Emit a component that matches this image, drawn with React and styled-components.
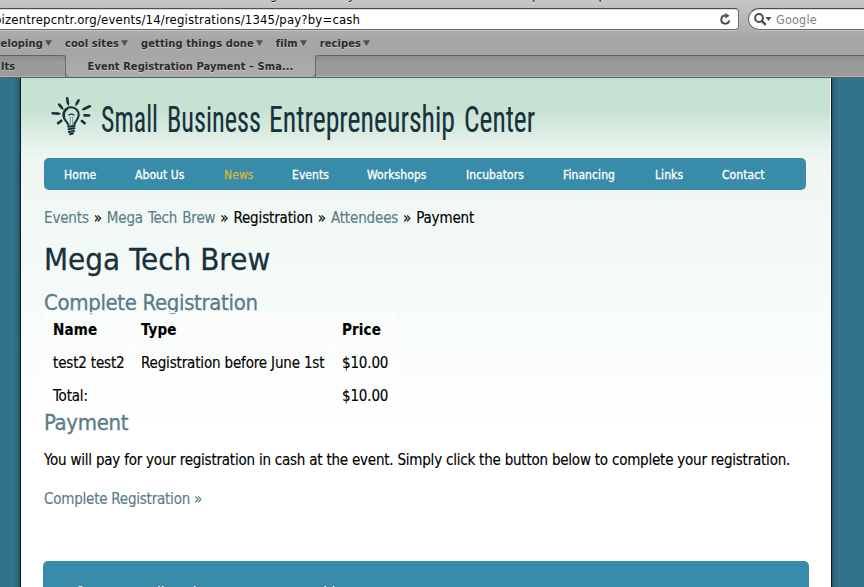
import React from 'react';
import styled, { createGlobalStyle } from 'styled-components';

const Global = createGlobalStyle`
  * { box-sizing: border-box; }
  body { margin: 0; overflow: hidden; }
`;

const sans = '"DejaVu Sans Condensed", "DejaVu Sans", sans-serif';

const Window = styled.div`
  width: 864px;
  height: 587px;
  display: flex;
  flex-direction: column;
  overflow: hidden;
  font-family: ${sans};
  font-stretch: condensed;
  color: #000;
`;

/* Browser chrome */
const Chrome = styled.header`
  flex: none;
  height: 78px;
  background: linear-gradient(#c6c6c6 0, #bdbdbd 12px, #a6a6a6 40px, #a5a5a5 100%);
`;

const TitleBar = styled.div`
  height: 8px;
  display: flex;
  align-items: flex-end;
  overflow: hidden;
  padding: 0 0 5px 215px;
  font-size: 13px;
  line-height: 16px;
  letter-spacing: 0.38px;
  white-space: nowrap;
  color: #111;
  text-shadow: 0 1px 0 rgba(255, 255, 255, 0.6);
`;

const AddressRow = styled.div`
  display: flex;
  height: 22px;
  gap: 9px;
`;

const UrlField = styled.div`
  width: 739px;
  display: flex;
  align-items: center;
  justify-content: space-between;
  padding: 1px 6px 0 0;
  background: #fff;
  border: 1px solid #6d6d6d;
  border-top: 1px solid #4e4e4e;
  border-left: 0;
  border-radius: 0 4px 4px 0;
  box-shadow: 0 1px 0 #c4c4c4, inset 0 1px 0 #d8d8d8;
  font-size: 13px;
  line-height: 16px;
  letter-spacing: 0.17px;
`;

const Url = styled.span`
  margin-left: -6px;
`;

const SearchField = styled.div`
  flex: 1;
  display: flex;
  align-items: center;
  gap: 4px;
  padding: 1px 0 0 5px;
  background: #fff;
  border: 1px solid #6d6d6d;
  border-top-color: #4e4e4e;
  border-right: 0;
  border-radius: 11px 0 0 11px;
  box-shadow: 0 1px 0 #c4c4c4, inset 0 1px 0 #d8d8d8;
  font-size: 12.5px;
  letter-spacing: 0.2px;
  color: #808080;
`;

const Bookmarks = styled.nav`
  height: 25px;
  display: flex;
  align-items: center;
  gap: 13px;
  padding-top: 1px;
  font-size: 11px;
  font-weight: 700;
  letter-spacing: 0.12px;
  color: #2b2b2b;
  text-shadow: 0 1px 0 rgba(255, 255, 255, 0.35);
`;

const Bookmark = styled.span`
  display: flex;
  align-items: center;
  gap: 2px;
  margin-left: ${(p) => p.$shift || 0}px;
  white-space: nowrap;
`;

const Tabs = styled.div`
  height: 23px;
  display: flex;
  border-bottom: 1px solid #606060;
  font-size: 11px;
  font-weight: 700;
  letter-spacing: 0.07px;
  line-height: 21px;
  color: #2b2b2b;
  text-shadow: 0 1px 0 rgba(255, 255, 255, 0.35);
`;

const BackTab = styled.div`
  width: ${(p) => (p.$grow ? 'auto' : '66px')};
  flex: ${(p) => (p.$grow ? 1 : 'none')};
  padding-left: 1px;
  background: linear-gradient(#8e8e8e, #9b9b9b 7px, #9b9b9b);
  border-top: 1px solid #636363;
  border-${(p) => (p.$grow ? 'left' : 'right')}: 1px solid #6c6c6c;
  border-radius: ${(p) => (p.$grow ? '4px 0 0 0' : '0 4px 0 0')};
  box-shadow: inset 0 -1px 0 #b5b5b5;
`;

const ActiveTab = styled.div`
  width: 251px;
  margin: 0 -1px;
  z-index: 1;
  text-align: center;
  line-height: 23px;
  background: linear-gradient(#a6a6a6, #adadad);
  border: solid #6c6c6c;
  border-width: 0 1px;
  border-radius: 0 0 5px 5px;
`;

/* Site */
const Site = styled.main`
  flex: 1;
  display: flex;
  min-height: 0;
  background: #30738a;
  -webkit-text-stroke: 0.15px currentColor;
`;

const Side = styled.div`
  width: ${(p) => p.$width}px;
  flex: none;
  background: linear-gradient(to ${(p) => p.$dir}, #30738a calc(100% - 8px), #2c697e calc(100% - 4px), #235464 calc(100% - 1px), #0b1d24 calc(100% - 1px), #0b1d24 100%);
`;

const Page = styled.div`
  flex: 1;
  display: flex;
  flex-direction: column;
  padding: 0 21px 0 23px;
  border-right: 1px solid #fff;
  background: linear-gradient(#c4e1d1 0, #c6e2d3 30px, #e9f4ee 72px, #f0f7f2 84px, #f3f9f6 170px, #f8fcfa 250px, #fff 350px);
`;

const Brand = styled.div`
  height: 80px;
  flex: none;
`;

const Menu = styled.nav`
  height: 32px;
  flex: none;
  width: 762px;
  display: flex;
  align-items: center;
  padding: 1px 0 0 20px;
  background: #398ca9;
  border-radius: 5px;
  font-size: 12px;
  letter-spacing: 0.08px;
  color: #fff;
`;

const MenuItem = styled.a`
  width: ${(p) => p.$width}px;
  flex: none;
  color: ${(p) => (p.$active ? '#d2b541' : '#fff')};
  -webkit-text-stroke: 0.3px currentColor;
`;

const Crumbs = styled.div`
  margin-top: 18px;
  font-size: 15px;
  line-height: 20px;
  letter-spacing: -0.15px;
  word-spacing: 0.8px;
  white-space: nowrap;
`;

const Link = styled.a`
  color: #5a7c88;
`;

const Title = styled.h1`
  margin: 11px 0 0;
  font-size: 31px;
  line-height: 40px;
  letter-spacing: 0.05px;
  font-weight: 400;
  color: #18323c;
  -webkit-text-stroke: 0.3px currentColor;
`;

const Heading = styled.h2`
  margin: ${(p) => p.$top}px 0 0;
  font-size: 22px;
  line-height: 26px;
  letter-spacing: -0.35px;
  font-weight: 400;
  color: #5a7c88;
  -webkit-text-stroke: 0.3px currentColor;
`;

const Table = styled.table`
  width: 352px;
  margin-top: -4px;
  border-collapse: collapse;
  table-layout: fixed;
  font-size: 15px;
  line-height: 18px;
  letter-spacing: -0.16px;
`;

const Cell = styled.td`
  width: ${(p) => p.$width}px;
  height: 33px;
  padding: 2px 0 0 8px;
  border: 1px solid rgba(255, 255, 255, 0.9);
  background: rgba(255, 255, 255, 0.3);
  text-align: left;
  white-space: nowrap;
  font-weight: ${(p) => (p.$bold ? 700 : 400)};
  letter-spacing: ${(p) => (p.$bold ? '0.15px' : 'inherit')};
`;

const Text = styled.p`
  margin: ${(p) => p.$top}px 0 0;
  font-size: 15px;
  line-height: 20px;
  letter-spacing: -0.22px;
  white-space: nowrap;
`;

const Footer = styled.footer`
  flex: none;
  width: 766px;
  height: 60px;
  margin: 52px 0 0 -1px;
  padding: 21px 0 0 31px;
  background: #398ca9;
  border-radius: 5px;
  font-size: 14px;
  line-height: 20px;
  letter-spacing: 0.25px;
  color: #fff;
`;

const Arrow = () => (
  <svg width="7" height="6" viewBox="0 0 7 6">
    <path d="M0 .3h7L3.5 6z" fill="#505050" />
  </svg>
);

const ReloadIcon = () => (
  <svg width="13" height="13" viewBox="0 0 13 13" fill="none">
    <path d="M10.3 7.6a4.1 4.1 0 1 1-4-5.1" stroke="#4c4c4c" strokeWidth="1.9" />
    <path d="M6.2 0v5.4L10.6 2.7z" fill="#4c4c4c" />
  </svg>
);

const SearchIcon = () => (
  <svg width="18" height="13" viewBox="0 0 18 13" fill="none">
    <circle cx="5" cy="5" r="3.9" stroke="#4c4c4c" strokeWidth="2" />
    <path d="M7.8 7.8l4 4" stroke="#4c4c4c" strokeWidth="2.4" />
    <path d="M11.5 4h6l-3 4z" fill="#4c4c4c" />
  </svg>
);

const words = [
  ['Small', 57, 57],
  ['Business', 123, 94],
  ['Entrepreneurship', 225, 186],
  ['Center', 420, 71],
];

const Logo = () => (
  <svg width="520" height="80" viewBox="0 0 520 80">
    <g stroke="#18323c" fill="none" strokeLinecap="round">
      <path d="M24.2 49.5c-.2-3-4.6-4.8-4.9-9.6-.2-5 3.6-8.2 7.9-8.1 4.5.1 7.9 3.5 7.5 8.1-.4 4.4-4 5.7-4.3 9.3" transform="translate(0 -2.5)" strokeWidth="2.1" />
      <path d="M23.5 31.3c-2.6 1.8-3.4 4.4-2.9 7.2M24.8 37c1.5-.9 3.7-.9 5.2 0" strokeWidth="1.2" />
      <path d="M26.3 39v8M28.7 39v8" strokeWidth=".9" opacity=".5" />
      <path d="M24.4 48.8l6-.8M24.5 51.3l6-1.1M24.7 54l5.4-1.1M26 56.3l3-.8" strokeWidth="2" />
      <path d="M23.1 20.3l.9 5M34.6 22.3l-1.8 3.2M15.2 26.6l2.5 3M40 31l5.8-2.7M8.6 35.2l5.6.4M40.5 37.4l4.6.1M14.1 45.2l3.2-2.5M37.9 43l2.8 2.2" strokeWidth="2.6" />
      <path d="M24 24l.5 3M33.2 24.4l-1.5 2.9M38.5 31.9l2-1.2M17.2 29l1.9 2.4M13 35.5l3.2.2" strokeWidth="1.3" />
    </g>
    <g fill="#18323c" stroke="#18323c" strokeWidth=".15" fontFamily="Roboto, sans-serif" fontSize="37">
      {words.map(([word, x, width]) => (
        <text key={word} x={x} y="54.2" textLength={width} lengthAdjust="spacingAndGlyphs">{word}</text>
      ))}
    </g>
  </svg>
);

const bookmarks = ['cool sites', 'getting things done', 'film', 'recipes'];

const menu = [
  ['Home', 71], ['About Us', 89], ['News', 68], ['Events', 75], ['Workshops', 99],
  ['Incubators', 97], ['Financing', 92], ['Links', 67], ['Contact', 60],
];

export default function App() {
  return (
    <Window>
      <Global />
      <Chrome>
        <TitleBar>Event Registration Payment – Small Business Entrepreneurship Center</TitleBar>
        <AddressRow>
          <UrlField>
            <Url>bizentrepcntr.org/events/14/registrations/1345/pay?by=cash</Url>
            <ReloadIcon />
          </UrlField>
          <SearchField>
            <SearchIcon />
            Google
          </SearchField>
        </AddressRow>
        <Bookmarks>
          <Bookmark $shift={-6}>veloping<Arrow /></Bookmark>
          {bookmarks.map((b) => (
            <Bookmark key={b}>{b}<Arrow /></Bookmark>
          ))}
        </Bookmarks>
        <Tabs>
          <BackTab>lts</BackTab>
          <ActiveTab>Event Registration Payment – Sma...</ActiveTab>
          <BackTab $grow />
        </Tabs>
      </Chrome>
      <Site>
        <Side $width={21} $dir="right" />
        <Page>
          <Brand><Logo /></Brand>
          <Menu>
            {menu.map(([label, width]) => (
              <MenuItem key={label} $width={width} $active={label === 'News'}>{label}</MenuItem>
            ))}
          </Menu>
          <Crumbs>
            <Link>Events</Link> » <Link>Mega Tech Brew</Link> » Registration » <Link>Attendees</Link> » Payment
          </Crumbs>
          <Title>Mega Tech Brew</Title>
          <Heading $top={11}>Complete Registration</Heading>
          <Table>
            <tbody>
              <tr>
                <Cell as="th" $width={88} $bold>Name</Cell>
                <Cell as="th" $width={201} $bold>Type</Cell>
                <Cell as="th" $width={62} $bold>Price</Cell>
              </tr>
              <tr>
                <Cell>test2 test2</Cell>
                <Cell>Registration before June 1st</Cell>
                <Cell>$10.00</Cell>
              </tr>
              <tr>
                <Cell colSpan={2}>Total:</Cell>
                <Cell>$10.00</Cell>
              </tr>
            </tbody>
          </Table>
          <Heading $top={-2}>Payment</Heading>
          <Text $top={14}>
            You will pay for your registration in cash at the event. Simply click the button below to complete your registration.
          </Text>
          <Text $top={19}><Link>Complete Registration »</Link></Text>
          <Footer>© 2010 Small Business Entrepreneurship Center</Footer>
        </Page>
        <Side $width={33} $dir="left" />
      </Site>
    </Window>
  );
}
